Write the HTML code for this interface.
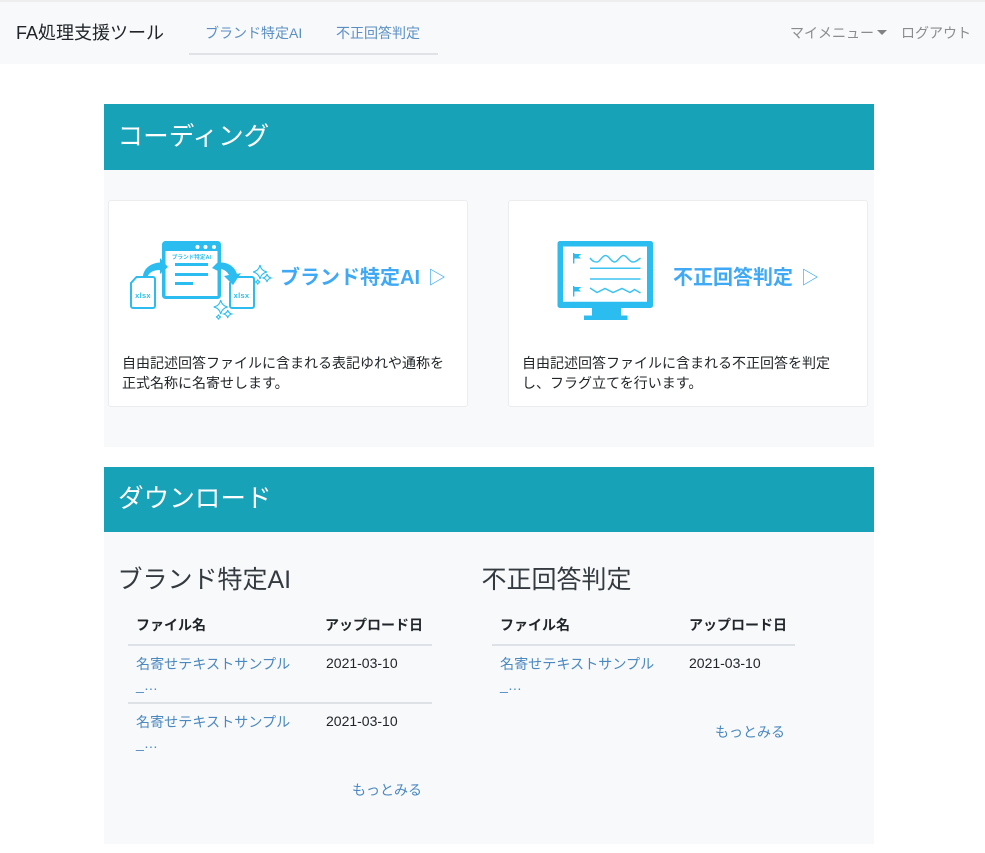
<!DOCTYPE html>
<html lang="ja"><head><meta charset="utf-8"><title>FA処理支援ツール</title>
<style>
html,body{margin:0;padding:0;background:#fff}
body{width:985px;height:853px;position:relative;overflow:hidden;font-family:"Liberation Sans","Noto Sans CJK JP",sans-serif;color:#212529}
.a{position:absolute;white-space:nowrap}
.b{position:absolute}
a{color:#4a88c0;text-decoration:none}
.h{color:#fff;font-size:25.600px;line-height:36px}
.t{font-size:14px;line-height:20px;color:#212529}
.k{font-size:14px;line-height:24px;color:#212529;font-weight:bold}
.l{font-size:14.100px;line-height:21px;color:#4a88c0}
.m{font-size:14px;line-height:24px;color:#4a88c0}
.d{font-size:14px;line-height:24px;color:#212529}
.s{font-size:25px;line-height:36px;color:#343a40}
.c{font-size:20px;line-height:28px;font-weight:bold;color:#3fa9f5}
.g{font-size:18px;line-height:28px;color:#3fa9f5}
</style></head><body>
<div class="b" style="left:0;top:2px;width:985px;height:62px;background:#f8f9fa"></div>
<div class="b" style="left:0;top:0;width:985px;height:2px;background:#eeeeee"></div>
<div class="a" style="left:16px;top:20px;font-size:18px;line-height:26px;color:#212529">FA処理支援ツール</div>
<a class="a" style="left:205px;top:21px;font-size:14px;line-height:24px;color:#5b8fc4">ブランド特定AI</a>
<a class="a" style="left:336px;top:21px;font-size:14px;line-height:24px;color:#5b8fc4">不正回答判定</a>
<div class="b" style="left:189px;top:53px;width:249px;height:2px;background:#e0e2e5"></div>
<div class="a" style="left:790px;top:21px;font-size:14px;line-height:24px;color:#8a8c8e">マイメニュー</div>
<div class="b" style="left:877px;top:30px;width:0;height:0;border-left:5px solid transparent;border-right:5px solid transparent;border-top:5px solid #808284"></div>
<div class="a" style="left:901px;top:21px;font-size:14px;line-height:24px;color:#8a8c8e">ログアウト</div>

<div class="b" style="left:104px;top:104px;width:770px;height:343px;background:#f8f9fa"></div>
<div class="b" style="left:104px;top:104px;width:770px;height:66px;background:#17a2b8"></div>
<div class="a h" style="left:117.500px;top:119px">コーディング</div>

<div class="b" style="left:108px;top:200px;width:358px;height:205px;background:#fff;border:1px solid #ebecee;border-radius:3px"></div>
<div class="b" style="left:508px;top:200px;width:358px;height:205px;background:#fff;border:1px solid #ebecee;border-radius:3px"></div>

<svg class="b" style="left:0;top:0" width="985" height="853" viewBox="0 0 985 853">
 <g fill="none" stroke="#2bbdf0">
  <path stroke-width="2" fill="#fff" d="M136.500 277h16.500a2 2 0 0 1 2 2v27a2 2 0 0 1-2 2h-20a2 2 0 0 1-2-2v-23z"/>
  <path stroke-width="2" fill="#fff" d="M235.500 277h16.500a2 2 0 0 1 2 2v27a2 2 0 0 1-2 2h-20a2 2 0 0 1-2-2v-23z"/>
 </g>
 <path fill="#2bbdf0" d="M165.500 241h52a3.500 3.500 0 0 1 3.500 3.500v51a3.500 3.500 0 0 1-3.500 3.500h-52a3.500 3.500 0 0 1-3.500-3.500v-51a3.500 3.500 0 0 1 3.500-3.500z"/>
 <rect x="165.500" y="251" width="52" height="45" fill="#fff"/>
 <circle cx="197.500" cy="247" r="2" fill="#fff"/><circle cx="205.500" cy="247" r="2" fill="#fff"/><circle cx="214" cy="247" r="2" fill="#fff"/>
 <rect x="175" y="263" width="33" height="3" fill="#2bbdf0"/>
 <rect x="175" y="273" width="33" height="3" fill="#2bbdf0"/>
 <rect x="175" y="282" width="18" height="3" fill="#2bbdf0"/>
 <text x="191.500" y="259" text-anchor="middle" font-size="5.600" font-weight="bold" fill="#2bbdf0">ブランド特定AI</text>
 <text x="143" y="298" text-anchor="middle" font-size="7.500" font-weight="bold" fill="#2bbdf0" letter-spacing=".3">xlsx</text>
 <text x="241.500" y="298" text-anchor="middle" font-size="7.500" font-weight="bold" fill="#2bbdf0" letter-spacing=".3">xlsx</text>
 <path fill="#2bbdf0" d="M143 276C144 268 151 263 160 262.500L160 258L168 267L160 274L160 270C154 270 149 272 147.500 277Z"/>
 <path fill="#2bbdf0" d="M212 268L220 260L220 262.500C228 262 235 267 237 274L241 273L233 285L224 276L229 275C227 271 223 269 220 269L220 272Z"/>
 <g fill="#fff" stroke="#2bbdf0" stroke-width="1.100">
  <path d="M260 265c.8 4 3 6.200 7 7-4 .8-6.200 3-7 7-.8-4-3-6.200-7-7 4-.8 6.200-3 7-7z"/>
  <path d="M267 274c.4 2 1.800 3.400 4 4-2.200.6-3.600 2-4 4-.4-2-1.800-3.400-4-4 2.200-.6 3.600-2 4-4z"/>
  <path d="M257.700 279.500c.3 1.300 1.200 2.200 2.500 2.500-1.300.3-2.200 1.200-2.500 2.500-.3-1.300-1.200-2.200-2.500-2.500 1.300-.3 2.200-1.200 2.500-2.500z"/>
  <path d="M220.700 300c.8 4 3 6.200 7 7-4 .8-6.200 3-7 7-.8-4-3-6.200-7-7 4-.8 6.200-3 7-7z"/>
  <path d="M227.700 310c.4 2 1.800 3.400 4 4-2.200.6-3.600 2-4 4-.4-2-1.800-3.400-4-4 2.200-.6 3.600-2 4-4z"/>
  <path d="M218.500 314.500c.3 1.300 1.200 2.200 2.500 2.500-1.300.3-2.200 1.200-2.500 2.500-.3-1.300-1.200-2.200-2.500-2.500 1.300-.3 2.200-1.200 2.500-2.500z"/>
 </g>

 <path fill="#2bbdf0" fill-rule="evenodd" d="M560 241h90.500a2.500 2.500 0 0 1 2.500 2.500v62a2.500 2.500 0 0 1-2.500 2.500H621v7.500h6.500v4.500h-43.500v-4.500h8v-7.500H560a2.500 2.500 0 0 1-2.500-2.500v-62A2.500 2.500 0 0 1 560 241zM563 246.500v55.200h84v-55.200z"/>
 <g fill="#2bbdf0">
  <path d="M573 253h1.400v10.500h-1.400z"/><path d="M574 254h7.500l-3 2.200 2.500 2.300h-7z"/>
  <path d="M573 286h1.400v10.500h-1.400z"/><path d="M574 287h7.500l-3 2.200 2.500 2.300h-7z"/>
 </g>
 <g fill="none" stroke="#3cc3f2" stroke-width="1.500">
  <path d="M590 258C593 262 595 262 597 262C600 262 602 255.500 605.500 255.500C609 255.500 611 262 614.500 262C618 262 620 255.500 623.500 255.500C627 255.500 629 262 633 262C636 262 638 260 640.500 258"/>
  <path d="M590 268.300h50.500M590 279h50.500"/>
  <path d="M590 288L597 292.500L605 288.500L613 292.500L622 288.500L630 292.500L634.500 289.500L640.500 293"/>
 </g>
</svg>

<div class="a c" style="left:280px;top:264px">ブランド特定AI</div>
<div class="a g" style="left:428px;top:263.500px">▷</div>
<div class="a c" style="left:673px;top:264px">不正回答判定</div>
<div class="a g" style="left:801px;top:263.500px">▷</div>
<div class="a t" style="left:122px;top:352.500px">自由記述回答ファイルに含まれる表記ゆれや通称を<br>正式名称に名寄せします。</div>
<div class="a t" style="left:522px;top:352.500px">自由記述回答ファイルに含まれる不正回答を判定<br>し、フラグ立てを行います。</div>

<div class="b" style="left:104px;top:467px;width:770px;height:377px;background:#f8f9fa"></div>
<div class="b" style="left:104px;top:467px;width:770px;height:65px;background:#17a2b8"></div>
<div class="a h" style="left:118px;top:481px">ダウンロード</div>

<div class="a s" style="left:117.500px;top:562px">ブランド特定AI</div>
<div class="a k" style="left:136px;top:613px">ファイル名</div>
<div class="a k" style="left:325px;top:613px">アップロード日</div>
<div class="b" style="left:128px;top:644px;width:304px;height:2px;background:#dee2e6"></div>
<a class="a l" style="left:136px;top:653.500px">名寄せテキストサンプル<br>_…</a>
<div class="a d" style="left:326px;top:651px">2021-03-10</div>
<div class="b" style="left:128px;top:702px;width:304px;height:2px;background:#dee2e6"></div>
<a class="a l" style="left:136px;top:711.500px">名寄せテキストサンプル<br>_…</a>
<div class="a d" style="left:326px;top:709px">2021-03-10</div>
<a class="a m" style="left:352px;top:778px">もっとみる</a>

<div class="a s" style="left:481.500px;top:562px">不正回答判定</div>
<div class="a k" style="left:500px;top:613px">ファイル名</div>
<div class="a k" style="left:689px;top:613px">アップロード日</div>
<div class="b" style="left:492px;top:644px;width:303px;height:2px;background:#dee2e6"></div>
<a class="a l" style="left:500px;top:653.500px">名寄せテキストサンプル<br>_…</a>
<div class="a d" style="left:689px;top:651px">2021-03-10</div>
<a class="a m" style="left:715px;top:720px">もっとみる</a>
</body></html>
